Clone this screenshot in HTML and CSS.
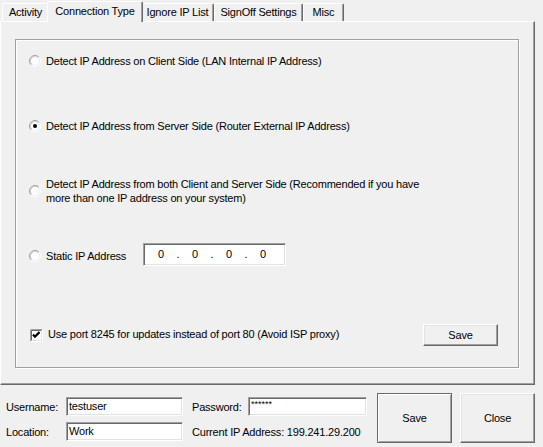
FILE: index.html
```html
<!DOCTYPE html>
<html>
<head>
<meta charset="utf-8">
<title>Connection Type</title>
<link rel="stylesheet" href="styles.css">
</head>
<body>
<div class="window">
  <div class="tabs">
    <div class="tab w-activity">Activity</div>
    <div class="tab tab-active w-conn">Connection Type</div>
    <div class="tab w-ignore">Ignore IP List</div>
    <div class="tab w-signoff">SignOff Settings</div>
    <div class="tab w-misc">Misc</div>
  </div>
  <div class="panel">
    <div class="frame">
      <div class="row r1">
        <svg class="radio" width="12" height="12" viewBox="0 0 12 12"><circle cx="6" cy="6" r="4.2" fill="#fff"/><path d="M2.11 9.89A5.5 5.5 0 0 1 9.89 2.11" fill="none" stroke="#a0a0a0"/><path d="M9.89 2.11A5.5 5.5 0 0 1 2.11 9.89" fill="none" stroke="#fff"/><path d="M2.82 9.18A4.5 4.5 0 0 1 9.18 2.82" fill="none" stroke="#cfcfcf"/><path d="M9.18 2.82A4.5 4.5 0 0 1 2.82 9.18" fill="none" stroke="#f0f0f0"/></svg>
        <span class="text">Detect IP Address on Client Side (LAN Internal IP Address)</span>
      </div>
      <div class="row r2">
        <svg class="radio" width="12" height="12" viewBox="0 0 12 12"><circle cx="6" cy="6" r="4.2" fill="#fff"/><path d="M2.11 9.89A5.5 5.5 0 0 1 9.89 2.11" fill="none" stroke="#a0a0a0"/><path d="M9.89 2.11A5.5 5.5 0 0 1 2.11 9.89" fill="none" stroke="#fff"/><path d="M2.82 9.18A4.5 4.5 0 0 1 9.18 2.82" fill="none" stroke="#cfcfcf"/><path d="M9.18 2.82A4.5 4.5 0 0 1 2.82 9.18" fill="none" stroke="#f0f0f0"/><circle cx="6" cy="6" r="2" fill="#000"/></svg>
        <span class="text">Detect IP Address from Server Side (Router External IP Address)</span>
      </div>
      <div class="row r3">
        <svg class="radio" width="12" height="12" viewBox="0 0 12 12"><circle cx="6" cy="6" r="4.2" fill="#fff"/><path d="M2.11 9.89A5.5 5.5 0 0 1 9.89 2.11" fill="none" stroke="#a0a0a0"/><path d="M9.89 2.11A5.5 5.5 0 0 1 2.11 9.89" fill="none" stroke="#fff"/><path d="M2.82 9.18A4.5 4.5 0 0 1 9.18 2.82" fill="none" stroke="#cfcfcf"/><path d="M9.18 2.82A4.5 4.5 0 0 1 2.82 9.18" fill="none" stroke="#f0f0f0"/></svg>
        <span class="text two-line">Detect IP Address from both Client and Server Side (Recommended if you have<br>more than one IP address on your system)</span>
      </div>
      <div class="row r4">
        <svg class="radio" width="12" height="12" viewBox="0 0 12 12"><circle cx="6" cy="6" r="4.2" fill="#fff"/><path d="M2.11 9.89A5.5 5.5 0 0 1 9.89 2.11" fill="none" stroke="#a0a0a0"/><path d="M9.89 2.11A5.5 5.5 0 0 1 2.11 9.89" fill="none" stroke="#fff"/><path d="M2.82 9.18A4.5 4.5 0 0 1 9.18 2.82" fill="none" stroke="#cfcfcf"/><path d="M9.18 2.82A4.5 4.5 0 0 1 2.82 9.18" fill="none" stroke="#f0f0f0"/></svg>
        <span class="text static-label">Static IP Address</span>
        <div class="ipbox">
          <span class="oct">0</span><span class="dot">.</span><span class="oct">0</span><span class="dot">.</span><span class="oct">0</span><span class="dot">.</span><span class="oct">0</span>
        </div>
      </div>
      <div class="row r5">
        <svg class="check" width="13" height="13" viewBox="0 0 13 13"><rect x="0" y="0" width="13" height="13" fill="#fff"/><path d="M0.5 12.5V0.5H12.5" fill="none" stroke="#a0a0a0"/><path d="M1.5 11.5V1.5H11.5" fill="none" stroke="#696969"/><path d="M0.5 12.5H12.5V0.5" fill="none" stroke="#fff"/><path d="M1.5 11.5H11.5V1.5" fill="none" stroke="#e3e3e3"/><path d="M3 5.5L5 7.5L9.5 3" fill="none" stroke="#000" stroke-width="2"/><path d="M3 6.5L5 8.5L9.5 4" fill="none" stroke="#000" stroke-width="1"/></svg>
        <span class="text check-label">Use port 8245 for updates instead of port 80 (Avoid ISP proxy)</span>
        <button class="btn small">Save</button>
      </div>
    </div>
  </div>
  <div class="bottom">
    <div class="fields">
      <span class="lbl">Username:</span>
      <div class="edit">testuser</div>
      <span class="lbl lbl-right">Password:</span>
      <div class="edit pw">******</div>
      <span class="lbl">Location:</span>
      <div class="edit">Work</div>
      <span class="lbl lbl-right span2">Current IP Address: 199.241.29.200</span>
    </div>
    <button class="btn big default">Save</button>
    <button class="btn big">Close</button>
  </div>
</div>
</body>
</html>
```
FILE: styles.css
```css
html, body {
  margin: 0;
  padding: 0;
  background: #f0f0f0;
}
body {
  width: 543px;
  height: 447px;
  overflow: hidden;
  font-family: "Liberation Sans", Arial, sans-serif;
  font-size: 11px;
  letter-spacing: -0.2px;
  color: #000;
}
.window {
  width: 543px;
  height: 447px;
}
.tabs {
  display: flex;
  align-items: flex-end;
  height: 21px;
  padding-left: 2px;
  box-sizing: border-box;
}
.tab {
  box-sizing: border-box;
  height: 18px;
  line-height: 16px;
  text-align: center;
  white-space: nowrap;
  border-top: 1px solid #fff;
  border-left: 1px solid #fff;
  border-right: 1px solid #696969;
  box-shadow: inset -1px 0 0 #a0a0a0;
  border-radius: 2px 2px 0 0;
  background: #f0f0f0;
}
.w-activity { width: 47px; }
.w-conn { width: 92px; }
.w-ignore { width: 73px; }
.w-signoff { width: 89px; }
.w-misc { width: 41px; }
.tab-active {
  position: relative;
  z-index: 1;
  height: 21px;
  width: 96px;
  margin: 0 -2px -1px -2px;
  line-height: 19px;
}
.panel {
  box-sizing: border-box;
  width: 535px;
  height: 364px;
  border-top: 1px solid #fff;
  border-left: 1px solid #fff;
  border-right: 1px solid #696969;
  border-bottom: 1px solid #696969;
  box-shadow: inset -1px -1px 0 #a0a0a0;
  padding: 17px 0 0 14px;
}
.frame {
  box-sizing: border-box;
  width: 504px;
  height: 329px;
  border: 1px solid #a0a0a0;
  box-shadow: inset 1px 1px 0 #fff, 1px 1px 0 #fff;
  padding: 0 20px 0 13px;
  display: flex;
  flex-direction: column;
}
.row {
  display: flex;
  align-items: center;
  height: 16px;
}
.r1 { margin-top: 13px; }
.r2 { margin-top: 49px; }
.r3 { margin-top: 43px; height: 28px; }
.r4 { margin-top: 38px; height: 23px; }
.r5 { margin-top: 58px; height: 22px; }
.radio {
  flex: none;
  margin-right: 5px;
}
.r4 .radio { margin-top: 3px; }
.text {
  white-space: nowrap;
  line-height: 14px;
}
.two-line {
  line-height: 14px;
}
.static-label {
  width: 97px;
  margin-top: 3px;
}
.ipbox {
  box-sizing: border-box;
  width: 143px;
  height: 23px;
  background: #fff;
  border: 1px solid;
  border-color: #a0a0a0 #fff #fff #a0a0a0;
  box-shadow: inset 1px 1px 0 #696969, inset -1px -1px 0 #e3e3e3;
  display: flex;
  align-items: center;
  padding-left: 7px;
  padding-bottom: 2px;
}
.oct {
  width: 20px;
  text-align: center;
}
.dot {
  width: 14px;
  text-align: center;
}
.check {
  flex: none;
  margin-left: 1px;
  margin-right: 5px;
}
.check-label {
  margin-top: -2px;
}
.btn {
  box-sizing: border-box;
  font-family: inherit;
  font-size: 11px;
  letter-spacing: -0.2px;
  color: #000;
  background: #f0f0f0;
  padding: 0;
  margin: 0;
  border: 1px solid;
  border-color: #fff #696969 #696969 #fff;
  box-shadow: inset -1px -1px 0 #a0a0a0, inset 1px 1px 0 #e3e3e3;
  border-radius: 0;
}
.small {
  width: 75px;
  height: 22px;
  margin-left: auto;
}
.bottom {
  display: flex;
  align-items: flex-start;
  padding: 8px 0 0 6px;
}
.fields {
  display: grid;
  grid-template-columns: 60px 117px 65px 119px;
  grid-template-rows: 19px 19px;
  row-gap: 6px;
  margin-top: 4px;
  align-items: center;
}
.lbl {
  white-space: nowrap;
}
.lbl-right {
  padding-left: 9px;
}
.span2 {
  grid-column: 3 / span 2;
}
.edit {
  box-sizing: border-box;
  height: 19px;
  background: #fff;
  border: 1px solid;
  border-color: #a0a0a0 #fff #fff #a0a0a0;
  box-shadow: inset 1px 1px 0 #696969, inset -1px -1px 0 #e3e3e3;
  padding: 0 0 0 2px;
  line-height: 16px;
}
.pw {
  font-size: 9px;
  line-height: 12px;
  letter-spacing: 0;
}
.big {
  width: 75px;
  height: 50px;
  margin-left: 8px;
}
.default {
  margin-left: 10px;
  border-color: #696969;
  box-shadow: inset 1px 1px 0 #fff, inset -1px -1px 0 #a0a0a0;
}
```
